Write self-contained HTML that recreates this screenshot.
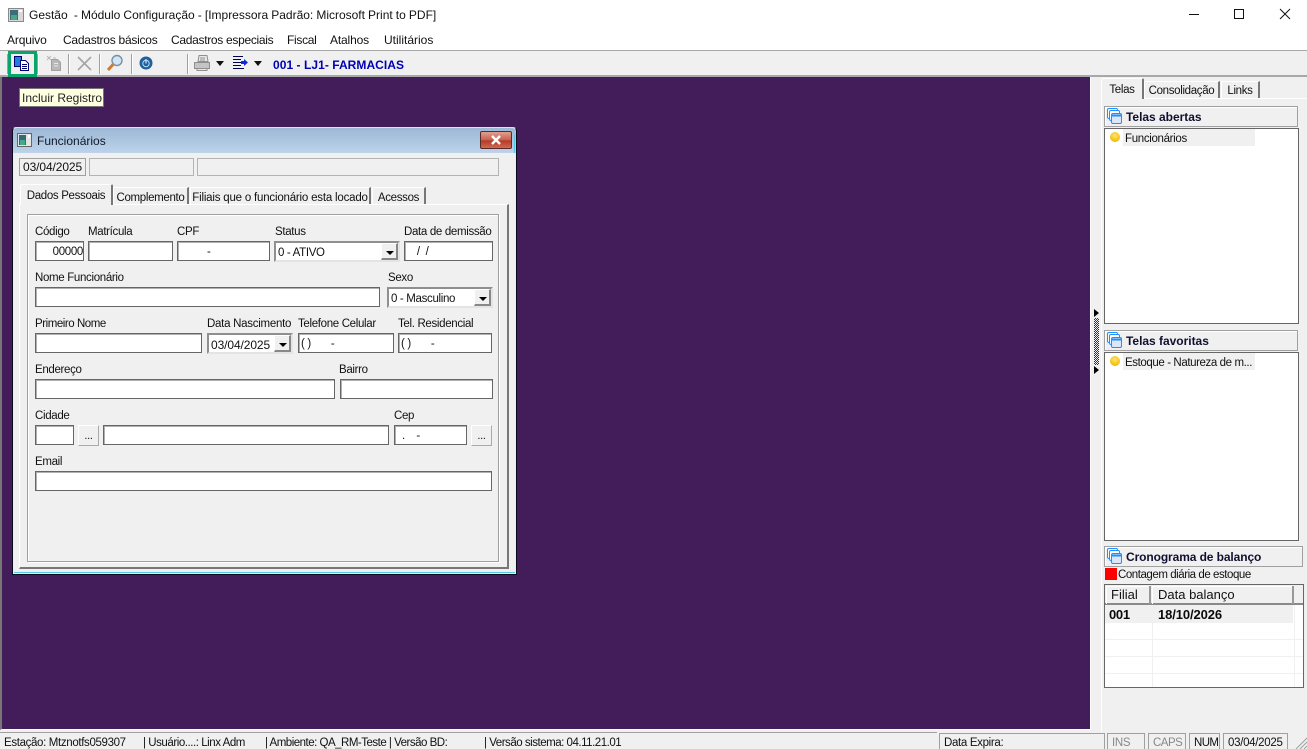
<!DOCTYPE html>
<html lang="pt"><head><meta charset="utf-8"><title>Gestão</title>
<style>
html,body{margin:0;padding:0;width:1307px;height:749px;overflow:hidden;background:#f0f0f0}
body{position:relative;font:11.5px/16px "Liberation Sans",sans-serif;letter-spacing:-.33px;color:#111}
div,span.a{position:absolute;box-sizing:border-box}
.t{white-space:pre;height:14px}
.x{line-height:14px}
.i{background:#fff;border:1px solid #666;box-shadow:inset 1px 1px 0 #b0b0b0;height:20px;white-space:pre;padding:1px 2px;line-height:18px;overflow:hidden}
.c{background:#fff;border:2px solid #8f8f8f;border-bottom-color:#e4e4e4;border-right-color:#e4e4e4;height:21px;white-space:pre;padding:2px;line-height:16px}
.ar{right:0;top:0;bottom:0;width:17px;background:#f0f0f0;border-top:1px solid #fff;border-left:1px solid #fff;border-right:2px solid #888;border-bottom:2px solid #888}
.ar:after{content:"";position:absolute;left:4px;top:7px;border:4px solid transparent;border-top:4px solid #000;border-bottom:0}
.tab{background:#f0f0f0;border-top:1px solid #fff;border-left:1px solid #fff;border-right:2px solid #777;white-space:pre;text-align:center}
.b{background:#f0f0f0;border:1px solid;border-color:#fff #aaa #aaa #fff;text-align:center;line-height:20px;font-size:11px;height:21px}
.hd{background:#f0f0f0;border:1px solid #a0a0a0;box-shadow:inset 1px 1px 0 #fff;font-weight:bold;font-size:12px;line-height:14px;letter-spacing:-.02px;height:21px;white-space:pre;padding:3px 0 0 21px;color:#101030}
.lst{background:#fff;border:1px solid #666}
.st{border:1px solid #a0a0a0;border-bottom:0;height:16px;white-space:pre;padding:1px 4px;line-height:16px}
.dis{color:#888}
.sep{width:2px;height:20px;top:54px;background:linear-gradient(90deg,#a0a0a0 50%,#fff 50%)}
.drop{width:0;height:0;border:4px solid transparent;border-top:5px solid #111;border-bottom:0}
.ball{width:10px;height:10px;border-radius:50%;background:radial-gradient(circle at 50% 35%,#ffe96a,#f4bb10 70%,#b98a10)}
.d{font-size:12px;letter-spacing:-.1px}
</style></head><body>

<!-- title bar -->
<div style="left:0;top:0;width:1307px;height:50px;background:#fff"></div>
<svg style="position:absolute;left:8px;top:8px" width="16" height="14" viewBox="0 0 16 14"><rect x=".5" y=".5" width="15" height="13" fill="#d8d8d8" stroke="#8a8a8a"/><rect x="2" y="2" width="8" height="10" fill="#3a6f78"/><rect x="3" y="7" width="6" height="5" fill="#4aa58a"/><rect x="11" y="2" width="3" height="2" fill="#fff"/></svg>
<div class="t x" style="left:29px;top:8px;font-size:12px;letter-spacing:-.01px;word-spacing:-.2px">Gestão  - Módulo Configuração - [Impressora Padrão: Microsoft Print to PDF]</div>
<svg style="position:absolute;left:1185px;top:5px" width="110" height="18" viewBox="0 0 110 18" fill="none" stroke="#111"><path d="M4 9.5h10"/><rect x="49.5" y="4.5" width="9" height="9"/><path d="M95 4l10 10M105 4l-10 10"/></svg>

<!-- menu -->
<div class="t x" style="left:7px;top:33px;font-size:12px;letter-spacing:-.15px">Arquivo</div>
<div class="t x" style="left:63px;top:33px;font-size:12px;letter-spacing:-.25px">Cadastros básicos</div>
<div class="t x" style="left:171px;top:33px;font-size:12px;letter-spacing:-.3px">Cadastros especiais</div>
<div class="t x" style="left:287px;top:33px;font-size:12px;letter-spacing:-.3px">Fiscal</div>
<div class="t x" style="left:330px;top:33px;font-size:12px;letter-spacing:-.15px">Atalhos</div>
<div class="t x" style="left:384px;top:33px;font-size:12px;letter-spacing:0">Utilitários</div>

<!-- toolbar -->
<div style="left:0;top:50px;width:1307px;height:27px;background:#f0f0f0;border-top:1px solid #a8a8a8;border-bottom:2px solid #a8a8a8"></div>
<div class="sep" style="left:7px"></div><div class="sep" style="left:37px"></div><div class="sep" style="left:68px"></div><div class="sep" style="left:99px"></div><div class="sep" style="left:131px"></div><div class="sep" style="left:187px"></div>
<div style="left:8px;top:51px;width:29px;height:26px;border:3px solid #0aa56b"></div>
<svg style="position:absolute;left:14px;top:56px" width="16" height="15" viewBox="0 0 16 15"><path d="M.5.5h7v10h-7z" fill="#1e7fe0" stroke="#000070"/><path d="M6.5 4.5h5l3 3v7h-8z" fill="#fff" stroke="#000070"/><path d="M8 8.5h5M8 10.5h5M8 12.5h5" stroke="#000070"/></svg>
<svg style="position:absolute;left:46px;top:55px" width="16" height="16" viewBox="0 0 16 16" fill="none" stroke="#a0a0a0"><path d="M5.5 4.5h6l3 3v8h-9z" fill="#b8b8b8"/><path d="M8 8.5h4M8 11h4" stroke="#e8e8e8"/><path d="M1 1l2 2M5 1L3 3M1 5l2-2M5 5L3 3M7 3h3" stroke="#b8b8b8"/></svg>
<svg style="position:absolute;left:77px;top:56px" width="15" height="15" viewBox="0 0 15 15" fill="none" stroke="#a4a4a4" stroke-width="1.6"><path d="M1 1l13 13M14 1L1 14"/></svg>
<svg style="position:absolute;left:106px;top:54px" width="18" height="18" viewBox="0 0 18 18"><circle cx="11" cy="6.5" r="5" fill="#cfe6f6" stroke="#7d8fa0" stroke-width="1.4"/><path d="M7 10.5l-5 5.5" stroke="#d07a2a" stroke-width="3"/></svg>
<svg style="position:absolute;left:139px;top:56px" width="14" height="14" viewBox="0 0 14 14"><circle cx="7" cy="7" r="6.5" fill="#1f5f9c"/><circle cx="7" cy="7.5" r="3.2" fill="none" stroke="#bfe0f0" stroke-width="1"/><path d="M7 3v4.5" stroke="#bfe0f0" stroke-width="1.3"/></svg>
<svg style="position:absolute;left:193px;top:55px" width="18" height="16" viewBox="0 0 18 16" fill="none" stroke="#8f8f8f"><path d="M6 .5h8l1 6H5z" fill="#e8e8e8"/><path d="M1.5 7.5h15v6h-15z" fill="#c4c4c4"/><path d="M4 13.5h10v2H4z" fill="#e8e8e8"/><path d="M7 3h5M7 5h5"/></svg>
<div class="drop" style="left:216px;top:61px"></div>
<svg style="position:absolute;left:232px;top:56px" width="16" height="14" viewBox="0 0 16 14"><path d="M1 .5h10M1 3.5h8M1 6.5h8M1 9.5h8M1 12.5h11" stroke="#000050"/><path d="M9 5h3V3l4 3.5-4 3.5V8H9z" fill="#0a2ae0"/></svg>
<div class="drop" style="left:254px;top:61px"></div>
<div class="t x" style="left:273px;top:58px;font-size:12px;font-weight:bold;color:#0000b4;letter-spacing:.05px">001 - LJ1- FARMACIAS</div>

<!-- desktop -->
<div style="left:0;top:77px;width:1091px;height:653px;background:#431d5a;border-left:2px solid #777;border-right:1px solid #fff;border-bottom:1px solid #fff"></div>
<div class="t x" style="left:19px;top:88px;width:85px;height:19px;background:#ffffe1;border:1px solid #767676;padding:2px 2px;color:#222;font-size:12px;letter-spacing:0">Incluir Registro</div>

<!-- child window -->
<div style="left:12px;top:127px;width:505px;height:448px;background:#e6eef7;border:1px solid #0a0a1e;border-radius:4px 4px 0 0;border-top-color:#d8e4f0"></div>
<div style="left:13px;top:128px;width:503px;height:25px;background:linear-gradient(#9db8d6,#bcd3ea);border-radius:4px 4px 0 0"></div>
<div style="left:514px;top:135px;width:1px;height:438px;background:#55c8ea"></div>
<div style="left:14px;top:572px;width:501px;height:1px;background:#55c8ea"></div>
<svg style="position:absolute;left:17px;top:133px" width="15" height="14" viewBox="0 0 15 14"><rect x=".5" y=".5" width="14" height="13" fill="#e4e4e4" stroke="#666"/><rect x="2" y="2" width="7" height="10" fill="#2f6d7a"/><rect x="3" y="7" width="5" height="5" fill="#48a98a"/><rect x="11" y="2" width="2" height="3" fill="#fff"/></svg>
<div class="t x" style="left:37px;top:134px;color:#101828;font-size:12px;letter-spacing:0">Funcionários</div>
<div style="left:480px;top:131px;width:32px;height:18px;border:1px solid #5a2a2a;border-radius:2px;background:linear-gradient(#e0a090,#c9604e 50%,#b43a28 55%,#cf6a50)"></div>
<svg style="position:absolute;left:490px;top:135px" width="12" height="10" viewBox="0 0 12 10"><path d="M2 1l8 8M10 1L2 9" stroke="#fff" stroke-width="2.4"/></svg>
<div style="left:14px;top:153px;width:501px;height:419px;background:#f0f0f0"></div>

<div class="d x" style="left:19px;top:158px;width:67px;height:18px;border:1px solid #a0a0a0;padding:1px 3px;line-height:15px">03/04/2025</div>
<div style="left:89px;top:158px;width:105px;height:18px;border:1px solid #b4b4b4"></div>
<div style="left:197px;top:158px;width:302px;height:18px;border:1px solid #b4b4b4"></div>

<!-- tabs -->
<div style="left:19px;top:204px;width:490px;height:365px;border-top:1px solid #fff;border-left:1px solid #fff;border-right:2px solid #777;border-bottom:2px solid #777"></div>
<div class="tab" style="left:20px;top:184px;width:93px;height:21px;padding-top:3px;border-radius:2px 2px 0 0;background:#f0f0f0">Dados Pessoais</div>
<div class="tab" style="left:113px;top:187px;width:76px;height:17px;padding-top:2px">Complemento</div>
<div class="tab" style="left:190px;top:187px;width:181px;height:17px;padding-top:2px;letter-spacing:-.2px">Filiais que o funcionário esta locado</div>
<div class="tab" style="left:372px;top:187px;width:54px;height:17px;padding-top:2px">Acessos</div>

<div style="left:27px;top:214px;width:472px;height:348px;border:1px solid #a0a0a0;box-shadow:inset 1px 1px 0 #fff,1px 1px 0 #fff"></div>

<div class="t" style="left:35px;top:224px">Código</div>
<div class="t" style="left:88px;top:224px">Matrícula</div>
<div class="t" style="left:177px;top:224px">CPF</div>
<div class="t" style="left:275px;top:224px">Status</div>
<div class="t" style="left:404px;top:224px">Data de demissão</div>
<div class="i" style="left:35px;top:241px;width:49px;text-align:right;padding-right:0">00000</div>
<div class="i" style="left:88px;top:241px;width:85px"></div>
<div class="i" style="left:177px;top:241px;width:93px;padding-left:29px">-</div>
<div class="c" style="left:274px;top:241px;width:126px">0 - ATIVO<div class="ar"></div></div>
<div class="i" style="left:404px;top:241px;width:89px;padding-left:6px;word-spacing:3px"> / /</div>

<div class="t" style="left:35px;top:270px">Nome Funcionário</div>
<div class="t" style="left:388px;top:270px">Sexo</div>
<div class="i" style="left:35px;top:287px;width:345px"></div>
<div class="c" style="left:387px;top:287px;width:106px">0 - Masculino<div class="ar"></div></div>

<div class="t" style="left:35px;top:316px;letter-spacing:-.45px">Primeiro Nome</div>
<div class="t" style="left:207px;top:316px;letter-spacing:-.27px">Data Nascimento</div>
<div class="t" style="left:298px;top:316px">Telefone Celular</div>
<div class="t" style="left:398px;top:316px">Tel. Residencial</div>
<div class="i" style="left:35px;top:333px;width:167px"></div>
<div class="c d" style="left:207px;top:333px;width:86px">03/04/2025<div class="ar"></div></div>
<div class="i" style="left:298px;top:333px;width:96px">( )       -</div>
<div class="i" style="left:398px;top:333px;width:94px">( )       -</div>

<div class="t" style="left:35px;top:362px">Endereço</div>
<div class="t" style="left:339px;top:362px">Bairro</div>
<div class="i" style="left:35px;top:379px;width:300px"></div>
<div class="i" style="left:340px;top:379px;width:153px"></div>

<div class="t" style="left:35px;top:408px">Cidade</div>
<div class="t" style="left:394px;top:408px">Cep</div>
<div class="i" style="left:35px;top:425px;width:39px"></div>
<div class="b" style="left:78px;top:425px;width:21px">...</div>
<div class="i" style="left:103px;top:425px;width:286px"></div>
<div class="i" style="left:394px;top:425px;width:73px;padding-left:7px">.    -</div>
<div class="b" style="left:471px;top:425px;width:21px">...</div>

<div class="t" style="left:35px;top:454px">Email</div>
<div class="i" style="left:35px;top:471px;width:457px"></div>

<!-- splitter -->
<div style="left:1094px;top:318px;width:5px;height:47px;background:repeating-conic-gradient(#333 0 25%,#f0f0f0 0 50%) 0 0/2px 2px"></div>
<div style="left:1094px;top:309px;border:4px solid transparent;border-left:5px solid #000;border-right:0"></div>
<div style="left:1094px;top:366px;border:4px solid transparent;border-left:5px solid #000;border-right:0"></div>

<!-- right panel -->
<div style="left:1101px;top:98px;width:206px;height:634px;border-top:1px solid #fff;border-left:1px solid #fff"></div>
<div class="tab" style="left:1101px;top:78px;width:43px;height:21px;padding-top:3px;border-radius:2px 2px 0 0">Telas</div>
<div class="tab" style="left:1144px;top:81px;width:76px;height:17px;padding-top:1px">Consolidação</div>
<div class="tab" style="left:1221px;top:81px;width:39px;height:17px;padding-top:1px">Links</div>

<div class="hd" style="left:1104px;top:106px;width:194px">Telas abertas</div>
<svg style="position:absolute;left:1107px;top:108px" width="15" height="16" viewBox="0 0 15 16" fill="#fff" stroke="#1e90ff"><rect x=".5" y=".5" width="10" height="10" rx="1.5"/><rect x="2.5" y="2.5" width="10" height="10" rx="1.5"/><rect x="4.5" y="5.5" width="10" height="10" rx="1.5" fill="#dbe6f6"/><path d="M4.5 7.5h10" stroke-width="2"/></svg>
<div class="lst" style="left:1104px;top:128px;width:195px;height:196px"></div>
<div style="left:1123px;top:129px;width:132px;height:17px;background:#f0f0f0"></div>
<div class="ball" style="left:1110px;top:132px"></div>
<div class="t" style="left:1125px;top:131px">Funcionários</div>

<div class="hd" style="left:1104px;top:330px;width:194px">Telas favoritas</div>
<svg style="position:absolute;left:1107px;top:332px" width="15" height="16" viewBox="0 0 15 16" fill="#fff" stroke="#1e90ff"><rect x=".5" y=".5" width="10" height="10" rx="1.5"/><rect x="2.5" y="2.5" width="10" height="10" rx="1.5"/><rect x="4.5" y="5.5" width="10" height="10" rx="1.5" fill="#dbe6f6"/><path d="M4.5 7.5h10" stroke-width="2"/></svg>
<div class="lst" style="left:1104px;top:352px;width:195px;height:189px"></div>
<div style="left:1123px;top:353px;width:132px;height:17px;background:#f0f0f0"></div>
<div class="ball" style="left:1110px;top:356px"></div>
<div class="t" style="left:1125px;top:355px;letter-spacing:-.4px">Estoque - Natureza de m...</div>

<div class="hd" style="left:1104px;top:546px;width:199px;letter-spacing:-.1px">Cronograma de balanço</div>
<svg style="position:absolute;left:1107px;top:548px" width="15" height="16" viewBox="0 0 15 16" fill="#fff" stroke="#1e90ff"><rect x=".5" y=".5" width="10" height="10" rx="1.5"/><rect x="2.5" y="2.5" width="10" height="10" rx="1.5"/><rect x="4.5" y="5.5" width="10" height="10" rx="1.5" fill="#dbe6f6"/><path d="M4.5 7.5h10" stroke-width="2"/></svg>
<div style="left:1105px;top:568px;width:12px;height:12px;background:#f00"></div>
<div class="t" style="left:1118px;top:567px;letter-spacing:-.45px">Contagem diária de estoque</div>

<div style="left:1104px;top:584px;width:200px;height:104px;background:#fff;border:1px solid #666"></div>
<div style="left:1105px;top:585px;width:198px;height:20px;background:#f0f0f0;border-bottom:2px solid #8a8a8a"></div>
<div class="t x" style="left:1106px;top:586px;width:45px;height:18px;border-right:2px solid #999;box-shadow:inset 1px 1px 0 #fff;padding:2px 5px;font-size:13px;letter-spacing:0">Filial</div>
<div class="t x" style="left:1152px;top:586px;width:142px;height:18px;border-right:2px solid #999;box-shadow:inset 1px 1px 0 #fff;padding:2px 6px;font-size:13px;letter-spacing:0">Data balanço</div>
<div style="left:1105px;top:605px;width:188px;height:18px;background:#f0f0f0"></div>
<div class="t x" style="left:1109px;top:608px;font-size:13px;font-weight:bold;color:#0a0a0a;letter-spacing:-.3px">001</div>
<div class="t x" style="left:1158px;top:608px;font-size:13px;font-weight:bold;color:#0a0a0a;letter-spacing:-.1px">18/10/2026</div>
<div style="left:1105px;top:639px;width:198px;height:1px;background:#f0f0f0"></div>
<div style="left:1105px;top:656px;width:198px;height:1px;background:#f0f0f0"></div>
<div style="left:1105px;top:673px;width:198px;height:1px;background:#f0f0f0"></div>
<div style="left:1152px;top:605px;width:1px;height:82px;background:#f0f0f0"></div>
<div style="left:1294px;top:605px;width:1px;height:82px;background:#f0f0f0"></div>

<!-- status bar -->
<div style="left:0;top:732px;width:937px;height:1px;background:#a0a0a0"></div>
<div class="t" style="left:4px;top:735px;letter-spacing:-.35px">Estação: Mtznotfs059307</div>
<div class="t" style="left:143px;top:735px;letter-spacing:-.45px">| Usuário....: Linx Adm</div>
<div class="t" style="left:265px;top:735px;letter-spacing:-.5px">| Ambiente: QA_RM-Teste | Versão BD:</div>
<div class="t" style="left:484px;top:735px;letter-spacing:-.48px">| Versão sistema: 04.11.21.01</div>
<div class="st" style="left:939px;top:733px;width:166px">Data Expira:</div>
<div class="st dis" style="left:1107px;top:733px;width:38px">INS</div>
<div class="st dis" style="left:1148px;top:733px;width:38px;letter-spacing:-.5px">CAPS</div>
<div class="st" style="left:1189px;top:733px;width:31px;padding-left:4px;letter-spacing:-.6px">NUM</div>
<div class="st" style="left:1223px;top:733px;width:65px;letter-spacing:-.3px">03/04/2025</div>
<svg style="position:absolute;left:1295px;top:737px" width="12" height="12" viewBox="0 0 12 12" stroke="#a0a0a0"><path d="M12 1L1 12M12 5L5 12M12 9L9 12"/></svg>
</body></html>
